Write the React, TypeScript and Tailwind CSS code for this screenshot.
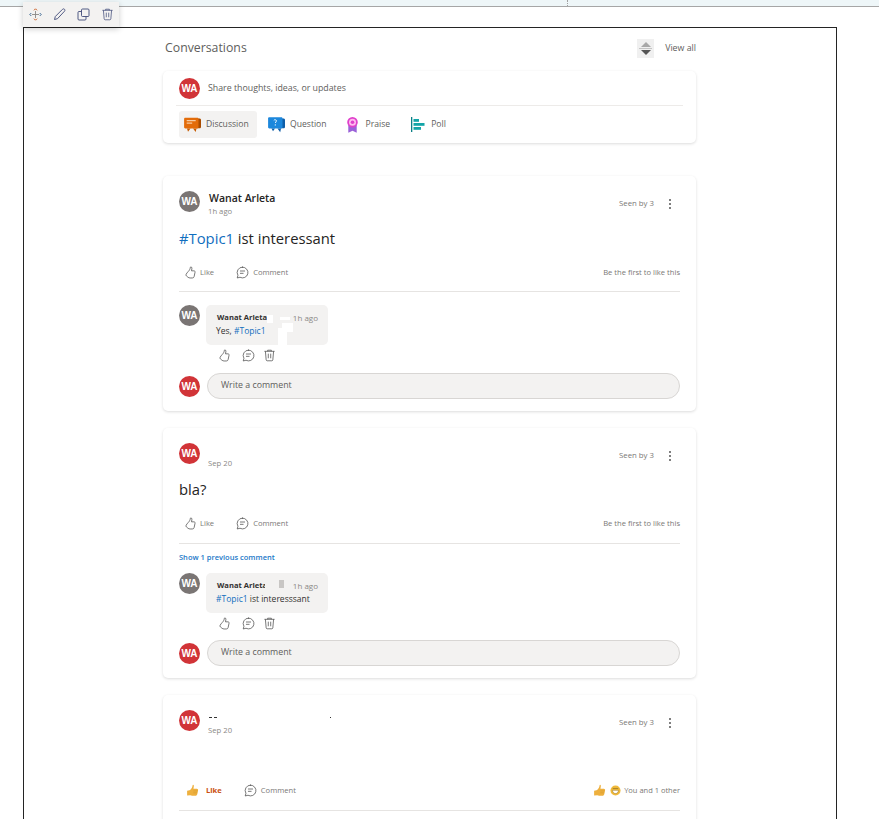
import React from 'react'

const font = 'font-["Open_Sans","Noto_Sans",sans-serif]'

function Avatar({ red, className = '' }: { red?: boolean; className?: string }) {
    return (
        <div
            className={`w-[21px] h-[21px] shrink-0 rounded-full flex items-center justify-center text-white text-[10px] font-bold font-["Liberation_Sans",sans-serif] ${red ? 'bg-[#d13438]' : 'bg-[#7a7574]'} ${className}`}
        >
            WA
        </div>
    )
}

function LikeIcon({ className = '' }: { className?: string }) {
    return (
        <svg viewBox="0 0 14 14" className={`w-[13px] h-[13px] ${className}`} fill="none" stroke="#4a4a4a" strokeWidth="0.8" strokeLinejoin="round">
            <path d="M7.4 1c.9 0 1.2.7 1.1 1.6L8.1 5.2h2.6c.9 0 1.4.7 1.2 1.5l-1 4.7c-.2.9-.9 1.5-1.9 1.5H6.6c-1 0-1.7-.3-2.4-.9l-1.6-1.3c-.6-.5-.7-1.2-.3-1.8l1.3-2c.3-.4.7-.6 1-.9C5.8 4.700 6.700 3 6.800 1.600 6.800 1.200 7 1 7.400 1z" />
        </svg>
    )
}

function CommentIcon({ className = '' }: { className?: string }) {
    return (
        <svg viewBox="0 0 14 14" className={`w-[13px] h-[13px] ${className}`} fill="none" stroke="#4a4a4a" strokeWidth="0.8" strokeLinecap="round" strokeLinejoin="round">
            <path d="M7 1.200a5.800 5.800 0 1 1-2.700 10.900L1.300 12.900l.8-2.900A5.800 5.800 0 0 1 7 1.200z" />
            <path d="M4.700 5.400h4.600M4.700 7.900h3" />
        </svg>
    )
}

function TrashIcon({ className = '', color = '#4a4a4a' }: { className?: string; color?: string }) {
    return (
        <svg viewBox="0 0 14 14" className={`w-[13px] h-[13px] ${className}`} fill="none" stroke={color} strokeWidth="0.8" strokeLinejoin="round">
            <path d="M1.500 2.500h11M5 2.500V1.300h4v1.200M2.600 2.500l.8 9.200c.1.600.5 1 1.100 1h5c.6 0 1-.4 1.100-1l.8-9.200" />
            <path d="M5.700 5v5M8.300 5v5" />
        </svg>
    )
}

function DotsIcon() {
    return (
        <div className="w-[10px] flex flex-col items-center gap-[2px]">
            <span className="w-[2px] h-[2px] rounded-full bg-[#555]" />
            <span className="w-[2px] h-[2px] rounded-full bg-[#555]" />
            <span className="w-[2px] h-[2px] rounded-full bg-[#555]" />
        </div>
    )
}

function ThumbEmoji({ className = '' }: { className?: string }) {
    return (
        <svg viewBox="0 0 14 14" className={`w-[13px] h-[13px] ${className}`}>
            <path d="M7.600 0.800c.8.200 1 .9.800 1.800L8 5h3.700c1 0 1.500.8 1.300 1.600l-.9 4.400c-.2 1-.9 1.600-1.900 1.600H6.500c-.7 0-1.300-.2-1.900-.5L1.200 12.500V7.200l2.600-.6c1.800-1 3-3 3.300-5.100 0-.4.100-.7.500-.7z" fill="#eeb03e" />
            <path d="M8 7.500h4.500M7.800 9.500h4.300" stroke="#d09428" strokeWidth="0.5" />
        </svg>
    )
}

function SmileEmoji() {
    return (
        <svg viewBox="0 0 12 12" className="w-[11px] h-[11px]">
            <circle cx="6" cy="6" r="5.500" fill="#f0b93a" />
            <path d="M3 3.800h6" stroke="#8a6a20" strokeWidth="0.7" />
            <path d="M2.800 5.800h6.400c0 2.200-1.400 3.500-3.200 3.500S2.800 8 2.800 5.800z" fill="#fff" stroke="#8a6a20" strokeWidth="0.5" />
        </svg>
    )
}

function DiscussionIcon() {
    return (
        <svg viewBox="0 0 17 16" className="w-[17px] h-[16px]">
            <path d="M12 1.500h3.500c.8 0 1.500.6 1.500 1.400v7c0 .8-.7 1.400-1.500 1.400H12z" fill="#a94c00" />
            <path d="M1.300 0.700h12c.7 0 1.200.5 1.200 1.200v8.300c0 .7-.5 1.200-1.200 1.200H1.300C.6 11.400.1 10.900.1 10.200V1.900C.1 1.200.6.700 1.300.7z" fill="#e36c0a" />
            <path d="M3 11.400h3.500L4 14.700zM9 11.400h3.500l-.8 3.600z" fill="#c75b00" />
            <path d="M2.700 3.700h9M2.700 6.100h5.500" stroke="#fbe3c8" strokeWidth="1" />
        </svg>
    )
}

function QuestionIcon() {
    return (
        <svg viewBox="0 0 17 16" className="w-[17px] h-[16px]">
            <path d="M12 1.500h3.500c.8 0 1.500.6 1.500 1.400v7c0 .8-.7 1.400-1.500 1.400H12z" fill="#0f5ea8" />
            <path d="M1.300 0.300h12c.7 0 1.200.5 1.200 1.200v8.700c0 .7-.5 1.200-1.200 1.200H1.300C.6 11.400.1 10.900.1 10.200V1.500C.1.800.6.300 1.300.3z" fill="#1c87dc" />
            <path d="M3.500 11.400h3.500L5 14.200zM9.500 11.400H13l-.8 3.800z" fill="#0f5ea8" />
            <path d="M5.800 3.400c.3-.9 2.700-1 2.700.5 0 1-1.200 1.100-1.200 2.100" stroke="#fff" strokeWidth="0.9" fill="none" />
            <circle cx="7.300" cy="7.900" r="0.600" fill="#fff" />
        </svg>
    )
}

function PraiseIcon() {
    return (
        <svg viewBox="0 0 13 16" className="w-[13px] h-[16px]">
            <path d="M2.300 8h8.400v7.800l-4.200-2-4.200 2z" fill="#9a62d8" />
            <circle cx="6.500" cy="5.300" r="4.400" fill="#fbe" stroke="#e040cc" strokeWidth="1.800" />
            <circle cx="6.500" cy="5.300" r="1.800" fill="#e040cc" />
        </svg>
    )
}

function PollIcon() {
    return (
        <svg viewBox="0 0 14 15" className="w-[14px] h-[15px]">
            <rect x="0" y="0" width="1.300" height="15" fill="#0b7f86" />
            <rect x="2.500" y="2" width="5.500" height="2.800" fill="#13a5a8" />
            <rect x="2.500" y="6" width="11" height="2.800" fill="#13a5a8" />
            <rect x="2.500" y="10" width="7.500" height="2.800" fill="#13a5a8" />
        </svg>
    )
}

function ComposerTab({ icon, label, active }: { icon: React.ReactNode; label: string; active?: boolean }) {
    return (
        <div className={`h-[27px] flex items-center gap-[5px] px-[5px] rounded-[3px] ${active ? 'w-[78px] bg-[#f3f2f1]' : ''}`}>
            <div className="w-[17px] flex justify-center">{icon}</div>
            <span className="text-[8.600px] text-[#605e5c]">{label}</span>
        </div>
    )
}

function ActionRow({ liked, right }: { liked?: boolean; right: React.ReactNode }) {
    return (
        <div className="flex items-center justify-between h-[17px]">
            {liked ? (
                <div className="flex items-center pl-[7px]">
                    <ThumbEmoji />
                    <span className="ml-[7px] text-[7.600px] font-bold text-[#ca5010]">Like</span>
                    <CommentIcon className="ml-[22px]" />
                    <span className="ml-[4px] text-[7.600px] text-[#7a7876]">Comment</span>
                </div>
            ) : (
                <div className="flex items-center pl-[5px]">
                    <LikeIcon />
                    <span className="ml-[3px] text-[7.600px] text-[#7a7876]">Like</span>
                    <CommentIcon className="ml-[22px]" />
                    <span className="ml-[4px] text-[7.600px] text-[#7a7876]">Comment</span>
                </div>
            )}
            {right}
        </div>
    )
}

function PostHeader({ red, name, time }: { red?: boolean; name?: React.ReactNode; time: string }) {
    return (
        <div className="flex items-start h-[30px]">
            <Avatar red={red} />
            <div className="ml-[8px] flex-1 flex flex-col">
                <span className="h-[14px] pl-[1px] text-[10.500px] leading-[14px] font-semibold text-[#252423]">{name}</span>
                <span className="text-[7.700px] leading-[12px] text-[#8a8886]">{time}</span>
            </div>
            <div className="flex items-center gap-[11px] mt-[7px] pr-[5px]">
                <span className="text-[7.800px] text-[#7a7876]">Seen by 3</span>
                <DotsIcon />
            </div>
        </div>
    )
}

function Comment({ children, patch }: { children: React.ReactNode; patch: React.ReactNode }) {
    return (
        <div>
            <div className="flex items-start">
                <Avatar />
                <div className="ml-[6px] relative w-[122px] h-[40px] rounded-[5px] bg-[#f3f2f1] pl-[10px] pt-[7px]">
                    <div className="flex justify-between pl-[1px] pr-[10px] h-[12px] items-center">
                        <span className="text-[7.600px] font-bold text-[#323130]">Wanat Arleta</span>
                        <span className="text-[8px] text-[#8a8886]">1h ago</span>
                    </div>
                    <div className="text-[8.500px] leading-[13px] text-[#323130]">{children}</div>
                    {patch}
                </div>
            </div>
            <div className="flex items-center gap-[11px] ml-[39px] mt-[4px] h-[13px]">
                <LikeIcon />
                <CommentIcon />
                <TrashIcon className="-ml-[3px]" />
            </div>
        </div>
    )
}

function WriteComment({ className }: { className: string }) {
    return (
        <div className={`flex items-center ${className}`}>
            <Avatar red />
            <div className="ml-[7px] flex-1 h-[26px] rounded-full bg-[#f3f2f1] border border-[#d8d6d4] flex items-center pl-[13px] text-[8.800px] text-[#605e5c]">
                Write a comment
            </div>
        </div>
    )
}

const likeFirst = <span className="text-[7.600px] text-[#7a7876]">Be the first to like this</span>

export default function App() {
    return (
        <div className={`relative h-[819px] overflow-hidden bg-white ${font}`}>
            {/* host page strip */}
            <div className="relative h-[7px] bg-[#eef6f8] border-b border-[#a6a6a6]">
                <div className="absolute left-[567px] top-0 h-[6px] border-l border-dotted border-[#a0a0a0]" />
            </div>

            {/* floating web part toolbar */}
            <div className="absolute left-[23px] top-[2px] w-[96px] h-[25px] bg-[#f3f2f1] shadow-[0_2px_6px_rgba(0,0,0,0.2)] flex items-center pl-[6px] gap-[11px]">
                <svg viewBox="0 0 13 13" className="w-[13px] h-[13px]" fill="none" strokeWidth="0.9">
                    <path d="M6.500 3v7M3 6.500h7" stroke="#8a8886" />
                    <path d="M5 2.300l1.500-1.500L8 2.300M5 10.700l1.500 1.500L8 10.700" stroke="#ca5010" />
                    <path d="M2.300 5L.8 6.500 2.300 8M10.700 5l1.500 1.500L10.700 8" stroke="#2b5c8a" />
                </svg>
                <svg viewBox="0 0 13 13" className="w-[13px] h-[13px]" fill="none" stroke="#3f4a78" strokeWidth="0.9" strokeLinejoin="round">
                    <path d="M1.500 11.500l.8-3L9.500 1.300c.6-.6 1.500-.6 2 0 .5.500.5 1.300 0 1.900L4.500 10.700z" />
                </svg>
                <svg viewBox="0 0 13 13" className="w-[13px] h-[13px]" fill="none" stroke="#3f4a78" strokeWidth="0.9" strokeLinejoin="round">
                    <rect x="4.500" y="1" width="7.500" height="7.500" rx="1" />
                    <path d="M4.500 3.500H2a1 1 0 0 0-1 1V11a1 1 0 0 0 1 1h6a1 1 0 0 0 1-1V8.500" />
                </svg>
                <TrashIcon color="#3f4a78" />
            </div>

            {/* frame */}
            <div className="ml-[23px] mt-[20px] w-[814px] h-[800px] border-t border-x border-[#242424]">
                <div className="ml-[139px] w-[533px]">
                    <div className="h-[41px] flex items-center justify-between">
                        <span className="pl-[2px] text-[12.300px] text-[#605e5c]">Conversations</span>
                        <div className="flex items-center gap-[11px]">
                            <div className="w-[17px] h-[19px] bg-[#f0f0f0] flex flex-col items-center justify-center gap-[1px]">
                                <span className="w-0 h-0 border-x-[5px] border-x-transparent border-b-[5px] border-b-[#a8a8a8]" />
                                <span className="w-[13px] h-px bg-[#c4c4c4]" />
                                <span className="w-0 h-0 border-x-[5px] border-x-transparent border-t-[5px] border-t-[#555]" />
                            </div>
                            <span className="text-[8.800px] text-[#605e5c]">View all</span>
                        </div>
                    </div>

                    {/* composer */}
                    <div className="mt-[2px] h-[72px] rounded-[5px] bg-white shadow-[0_1px_3px_rgba(0,0,0,0.14)] px-[13px]">
                        <div className="h-[35px] border-b border-[#edebe9] flex items-center pl-[3px]">
                            <Avatar red />
                            <span className="ml-[8px] pt-[2px] text-[8.800px] text-[#605e5c]">Share thoughts, ideas, or updates</span>
                        </div>
                        <div className="flex items-center gap-[1px] pl-[3px] mt-[5px]">
                            <ComposerTab active icon={<DiscussionIcon />} label="Discussion" />
                            <div className="w-[4px]" />
                            <ComposerTab icon={<QuestionIcon />} label="Question" />
                            <div className="w-[5px]" />
                            <ComposerTab icon={<PraiseIcon />} label="Praise" />
                            <div className="w-[7px]" />
                            <ComposerTab icon={<PollIcon />} label="Poll" />
                        </div>
                    </div>

                    {/* post one */}
                    <div className="mt-[33px] h-[235px] rounded-[5px] bg-white shadow-[0_1px_3px_rgba(0,0,0,0.14)] px-[16px] pt-[15px]">
                        <PostHeader name="Wanat Arleta" time="1h ago" />
                        <div className="mt-[4px] h-[28px] text-[14.800px] leading-[26px] text-[#252423]">
                            <span className="text-[#106ebe]">#Topic1</span> ist interessant
                        </div>
                        <div className="mt-[11px]">
                            <ActionRow right={likeFirst} />
                        </div>
                        <div className="mt-[10px] border-t border-[#e6e4e2]" />
                        <div className="mt-[13px]">
                            <Comment
                                patch={
                                    <>
                                        <div className="absolute left-[72px] top-[23px] w-[9px] h-[17px] bg-white" />
                                        <div className="absolute left-[76px] top-[18px] w-[11px] h-[9px] bg-white" />
                                        <div className="absolute left-[61px] top-[10px] w-[6px] h-[8px] bg-white" />
                                        <div className="absolute left-[74px] top-[12px] w-[10px] h-[3px] bg-white" />
                                    </>
                                }
                            >
                                Yes, <span className="text-[#106ebe]">#Topic1</span>
                            </Comment>
                        </div>
                        <WriteComment className="mt-[11px]" />
                    </div>

                    {/* post two */}
                    <div className="mt-[17px] h-[250px] rounded-[5px] bg-white shadow-[0_1px_3px_rgba(0,0,0,0.14)] px-[16px] pt-[15px]">
                        <PostHeader red time="Sep 20" />
                        <div className="mt-[3px] h-[28px] text-[14.800px] leading-[26px] text-[#252423]">bla?</div>
                        <div className="mt-[11px]">
                            <ActionRow right={likeFirst} />
                        </div>
                        <div className="mt-[11px] border-t border-[#e6e4e2]" />
                        <div className="mt-[7px] h-[12px] text-[7.500px] leading-[12px] font-semibold text-[#1b78c8]">Show 1 previous comment</div>
                        <div className="mt-[10px]">
                            <Comment
                                patch={
                                    <>
                                        <div className="absolute left-[59px] top-[6px] w-[14px] h-[12px] bg-[#f3f2f1]" />
                                        <div className="absolute left-[73px] top-[7px] w-[5px] h-[8px] bg-[#c8c6c4]" />
                                    </>
                                }
                            >
                                <span className="text-[#106ebe]">#Topic1</span> ist interesssant
                            </Comment>
                        </div>
                        <WriteComment className="mt-[10px]" />
                    </div>

                    {/* post three */}
                    <div className="mt-[17px] h-[140px] rounded-[5px] bg-white shadow-[0_1px_3px_rgba(0,0,0,0.14)] px-[16px] pt-[15px]">
                        <PostHeader
                            red
                            name={
                                <span className="flex items-center gap-[2px] h-[14px]">
                                    <span className="w-[3px] h-px bg-[#333]" />
                                    <span className="w-[3px] h-px bg-[#333]" />
                                    <span className="ml-[111px] w-px h-px bg-[#333]" />
                                </span>
                            }
                            time="Sep 20"
                        />
                        <div className="mt-[42px]">
                            <ActionRow
                                liked
                                right={
                                    <div className="flex items-center gap-[4px]">
                                        <ThumbEmoji />
                                        <SmileEmoji />
                                        <span className="-ml-[1px] text-[7.500px] text-[#7a7876]">You and 1 other</span>
                                    </div>
                                }
                            />
                        </div>
                        <div className="mt-[11px] border-t border-[#e6e4e2]" />
                    </div>
                </div>
            </div>
        </div>
    )
}
